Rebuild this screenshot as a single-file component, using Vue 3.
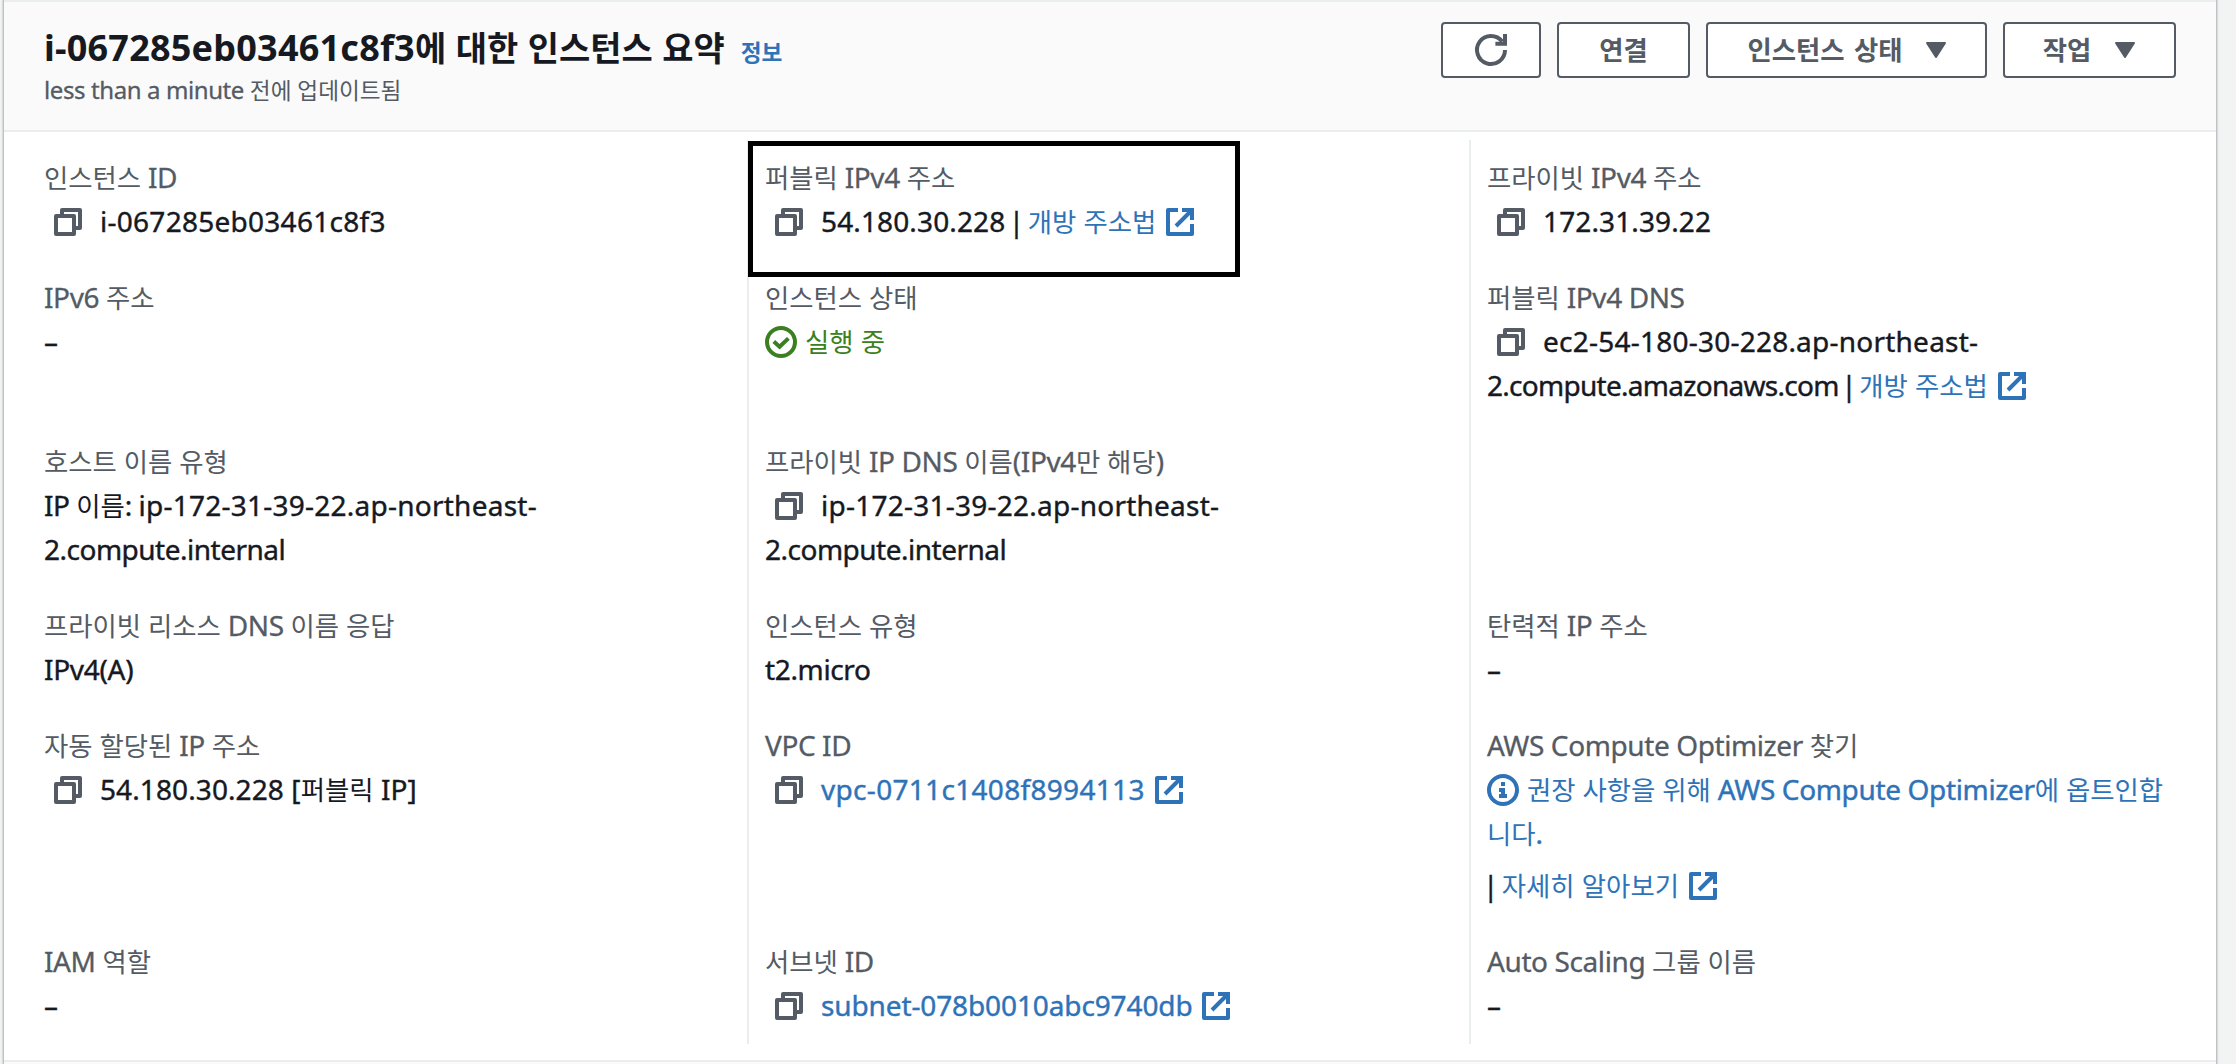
<script setup>
import { h } from 'vue'

// Splits a string into Hangul, separator and Latin runs so that each gets its own face and spacing.
const T = (props) =>
  h(
    'span',
    props.ls ? { style: { letterSpacing: props.ls + 'px' } } : {},
    props.t
      .split(/([\uac00-\ud7a3]+|\|)/)
      .filter(Boolean)
      .map((s) => {
        if (s === '|') return h('span', { class: 'bar' }, s)
        return /[\uac00-\ud7a3]/.test(s) ? h('span', { class: 'ko' }, s) : s
      }),
  )
T.props = ['t', 'ls']

const shapes = {
  copy: () => [
    h('rect', { x: 2, y: 5, width: 9, height: 9 }),
    h('path', { d: 'M5 4.5V2h9v9h-2.5' }),
  ],
  external: () => [
    h('path', { d: 'M7 2H2v12h12V9', 'stroke-linejoin': 'round' }),
    h('path', { d: 'M9 2h5v5M14 2l-8 8', 'stroke-linejoin': 'miter' }),
  ],
  ok: () => [
    h('circle', { cx: 8, cy: 8, r: 7 }),
    h('path', { d: 'M4.4 7.8l2.9 2.6 4.4-4.2', 'stroke-linejoin': 'miter' }),
  ],
  info: () => [
    h('circle', { cx: 8, cy: 8, r: 7 }),
    h('path', { d: 'M7 5h2M6 8h2v3M6 11h4', 'stroke-linejoin': 'miter' }),
  ],
  refresh: () => [
    h('path', { d: 'M15 8A7 7 0 1 1 13.6 3.8' }),
    h('path', { d: 'M10.2 4.9H15V0', 'stroke-linejoin': 'miter' }),
  ],
}
const Icon = (props) =>
  h('svg', { class: 'icon', viewBox: '0 0 16 16', 'stroke-linejoin': 'round' }, shapes[props.name]())
Icon.props = ['name']

// Every value is a list of lines; every line is a list of parts. ls is tracking in px.
const rows = [
  [
    { label: '인스턴스 ID', lines: [[{ copy: 1 }, { text: 'i-067285eb03461c8f3', ls: 0.27 }]] },
    {
      label: '퍼블릭 IPv4 주소',
      marked: true,
      lines: [[{ copy: 1 }, { text: '54.180.30.228 | ', ls: 0.13 }, { link: '개방 주소법', ext: 1 }]],
    },
    { label: '프라이빗 IPv4 주소', lines: [[{ copy: 1 }, { text: '172.31.39.22', ls: 0.12 }]] },
  ],
  [
    { label: 'IPv6 주소', lines: [[{ text: '–' }]] },
    { label: '인스턴스 상태', lines: [[{ ok: '실행 중' }]] },
    {
      label: '퍼블릭 IPv4 DNS',
      lines: [
        [{ copy: 1 }, { text: 'ec2-54-180-30-228.ap-northeast-', ls: 0.23 }],
        [{ text: '2.compute.amazonaws.com | ', ls: -0.72 }, { link: '개방 주소법', ext: 1 }],
      ],
    },
  ],
  [
    {
      label: '호스트 이름 유형',
      lines: [
        [{ text: 'IP 이름: ', ls: -0.5 }, { text: 'ip-172-31-39-22.ap-northeast-', ls: 0.24 }],
        [{ text: '2.compute.internal', ls: -0.5 }],
      ],
    },
    {
      label: '프라이빗 IP DNS 이름(IPv4만 해당)',
      lines: [
        [{ copy: 1 }, { text: 'ip-172-31-39-22.ap-northeast-', ls: 0.24 }],
        [{ text: '2.compute.internal', ls: -0.5 }],
      ],
    },
    null,
  ],
  [
    { label: '프라이빗 리소스 DNS 이름 응답', lines: [[{ text: 'IPv4(A)', ls: -0.3 }]] },
    { label: '인스턴스 유형', lines: [[{ text: 't2.micro', ls: -0.35 }]] },
    { label: '탄력적 IP 주소', lines: [[{ text: '–' }]] },
  ],
  [
    { label: '자동 할당된 IP 주소', lines: [[{ copy: 1 }, { text: '54.180.30.228 [퍼블릭 IP]', ls: 0.1 }]] },
    { label: 'VPC ID', lines: [[{ copy: 1 }, { link: 'vpc-0711c1408f8994113', ls: 0.31, ext: 1 }]] },
    {
      label: 'AWS Compute Optimizer 찾기',
      spaced: true,
      lines: [
        [{ info: '권장 사항을 위해 AWS Compute Optimizer에 옵트인합', ls: -0.35 }],
        [{ link: '니다.' }],
        [{ text: '| ' }, { link: '자세히 알아보기', ext: 1 }],
      ],
    },
  ],
  [
    { label: 'IAM 역할', lines: [[{ text: '–' }]] },
    { label: '서브넷 ID', lines: [[{ copy: 1 }, { link: 'subnet-078b0010abc9740db', ls: -0.12, ext: 1 }]] },
    { label: 'Auto Scaling 그룹 이름', lines: [[{ text: '–' }]] },
  ],
]
const columns = [0, 1, 2].map((c) => rows.map((r) => r[c]))
const rowLines = rows.map((r) => Math.max(...r.map((f) => (f ? f.lines.length : 0))))
const rowHeight = (i) => 44 * (rowLines[i] + 1) + (rows[i].some((f) => f && f.spaced) ? 8 : 0)
</script>

<template>
  <div class="page">
    <section class="panel">
      <header class="head">
        <div>
          <div class="title-row">
            <h2 class="title"><T t="i-067285eb03461c8f3에 대한 인스턴스 요약" :ls="0.22" /></h2>
            <a class="more"><T t="정보" /></a>
          </div>
          <p class="updated"><T t="less than a minute 전에 업데이트됨" :ls="-0.4" /></p>
        </div>
        <div class="actions">
          <button class="btn refresh"><Icon name="refresh" /></button>
          <button class="btn connect"><T class="cap" t="연결" /></button>
          <button class="btn state"><T class="cap" t="인스턴스 상태" /><svg class="caret" viewBox="0 0 22 18"><path d="M2 2h18l-9 14z" /></svg></button>
          <button class="btn work"><T class="cap" t="작업" /><svg class="caret" viewBox="0 0 22 18"><path d="M2 2h18l-9 14z" /></svg></button>
        </div>
      </header>
      <div class="body">
        <div v-for="(col, c) in columns" :key="c" class="col">
          <div v-for="(f, i) in col" :key="i" class="field" :style="{ height: rowHeight(i) + 'px' }">
            <template v-if="f">
              <div class="label"><T :t="f.label" /></div>
              <div v-for="(line, l) in f.lines" :key="l" class="line" :class="{ spaced: f.spaced && l === 2 }">
                <template v-for="(p, k) in line" :key="k">
                  <Icon v-if="p.copy" class="copy" name="copy" />
                  <T v-else-if="p.text" class="text" :t="p.text" :ls="p.ls" />
                  <span v-else-if="p.ok" class="status"><Icon name="ok" /><T class="text" :t="p.ok" /></span>
                  <a v-else-if="p.info" class="link info"><Icon name="info" /><T class="text" :t="p.info" :ls="p.ls" /></a>
                  <a v-else class="link"><T class="text" :t="p.link" :ls="p.ls" /><Icon v-if="p.ext" class="ext" name="external" /></a>
                </template>
              </div>
              <div v-if="f.marked" class="mark"></div>
            </template>
          </div>
        </div>
      </div>
      <div class="foot"></div>
    </section>
  </div>
</template>

<style>
body {
  background: #f2f3f3;
}
</style>

<style scoped>
.page {
  box-sizing: border-box;
  width: 2236px;
  height: 1064px;
  padding: 0 20px 0 4px;
  overflow: hidden;
  background: #f2f3f3;
  color: #16191f;
  font: 400 28px/44px "Noto Sans", "Noto Sans CJK KR", sans-serif;
}
.panel {
  display: flex;
  flex-direction: column;
  height: 1064px;
  background: #fff;
  box-shadow: 0 0 2px 1px rgba(0, 28, 36, 0.32);
}
.page :deep(.ko) {
  font-family: "Noto Sans CJK KR", sans-serif;
  font-size: 0.943em;
  line-height: 0;
  letter-spacing: 0;
  -webkit-text-stroke-width: 0;
}
.page :deep(.bar) {
  margin: 0 -4px;
  letter-spacing: 0;
}
.head {
  box-sizing: border-box;
  flex: none;
  display: flex;
  justify-content: space-between;
  height: 132px;
  padding: 20px 40px 0;
  background: #fafafa;
  border-top: 2px solid #eaeded;
  border-bottom: 2px solid #eaeded;
}
.title-row {
  display: flex;
  align-items: baseline;
  gap: 16px;
  height: 49px;
  padding-top: 1px;
  white-space: nowrap;
}
.title {
  margin: 0;
  font-size: 36px;
  line-height: 50px;
  font-weight: 700;
}
.more {
  color: #2e73b8;
  font-size: 24px;
  font-weight: 700;
}
.updated {
  margin: 0;
  color: #545b64;
  font-size: 24px;
  line-height: 36px;
  white-space: nowrap;
  -webkit-text-stroke-width: 0.3px;
}
.actions {
  display: flex;
  gap: 16px;
}
.btn {
  box-sizing: border-box;
  display: flex;
  align-items: center;
  justify-content: center;
  height: 56px;
  padding: 0;
  background: #fff;
  border: 2px solid #545b64;
  border-radius: 4px;
  color: #545b64;
  font: inherit;
  font-weight: 700;
  white-space: pre;
}
.refresh { width: 100px; }
.connect { width: 133px; }
.state { width: 281px; padding-left: 2px; }
.work { width: 173px; }
.cap {
  padding-bottom: 3px;
  word-spacing: 2px;
}
.caret {
  width: 22px;
  height: 18px;
  margin-left: 23px;
  fill: #545b64;
  stroke: #545b64;
  stroke-width: 2;
  stroke-linejoin: round;
}
.icon {
  flex: none;
  width: 32px;
  height: 32px;
  fill: none;
  stroke: currentColor;
  stroke-width: 2;
  overflow: visible;
}
.body {
  flex: none;
  display: grid;
  grid-template-columns: repeat(3, 722px);
  height: 904px;
  padding: 8px 0 16px 21px;
}
.col {
  display: flex;
  flex-direction: column;
  box-sizing: border-box;
  gap: 32px;
  padding: 16px 0 16px 16px;
  border-left: 2px solid #eaeded;
}
.col:first-child {
  border-left-color: transparent;
  padding-left: 17px;
}
.field {
  flex: none;
  position: relative;
}
.label {
  height: 45px;
  margin-top: -1px;
  color: #545b64;
  letter-spacing: -0.4px;
  white-space: pre;
  -webkit-text-stroke-width: 0.3px;
}
.line {
  display: flex;
  align-items: center;
  height: 44px;
  white-space: pre;
  -webkit-text-stroke-width: 0.4px;
}
.text {
  padding-bottom: 2px;
}
.spaced {
  margin-top: 8px;
}
.copy {
  margin: 0 16px 0 8px;
  color: #545b64;
}
.link {
  display: flex;
  align-items: center;
  color: #2e73b8;
  white-space: pre;
}
.link .ext {
  margin-left: 8px;
}
.status {
  display: flex;
  align-items: center;
  color: #3a8020;
}
.status .icon,
.info .icon {
  margin-right: 8px;
}
.mark {
  position: absolute;
  top: -15px;
  left: -17px;
  box-sizing: border-box;
  width: 492px;
  height: 136px;
  border: 5px solid #000;
}
.foot {
  flex: 1;
  background: #fafafa;
  border-top: 2px solid #eaeded;
}
</style>
